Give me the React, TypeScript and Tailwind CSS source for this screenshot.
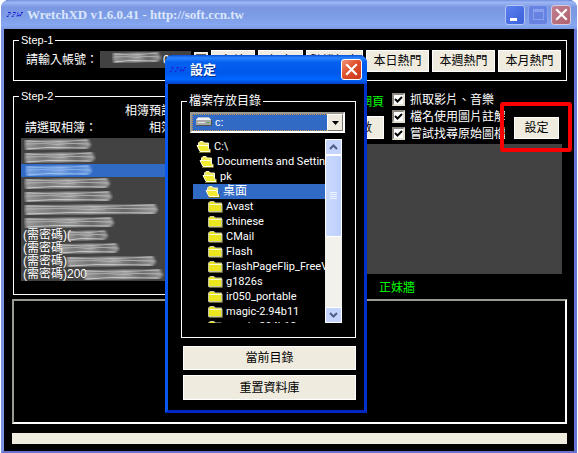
import { useState } from "react";
import type { ReactNode } from "react";

const albums = [
  { text: "", from: 3, to: 71 },
  { text: "", from: 3, to: 75 },
  { text: "", from: 4, to: 72, tint: "#a9cbf8" },
  { text: "", from: 3, to: 90 },
  { text: "", from: 3, to: 92 },
  { text: "", from: 3, to: 138 },
  { text: "", from: 3, to: 94 },
  { text: "(需密碼)(", from: 46, to: 88 },
  { text: "(需密碼", from: 38, to: 99 },
  { text: "(需密碼)", from: 45, to: 136 },
  { text: "(需密碼)200", from: 62, to: 143 },
];

const folders = [
  { name: "C:\\", open: true, pad: "pl-[3px]" },
  { name: "Documents and Settings", open: true, pad: "pl-[6px]" },
  { name: "pk", open: true, pad: "pl-[9px]" },
  { name: "桌面", open: true, pad: "pl-[12px]" },
  { name: "Avast", open: false, pad: "pl-[15px]" },
  { name: "chinese", open: false, pad: "pl-[15px]" },
  { name: "CMail", open: false, pad: "pl-[15px]" },
  { name: "Flash", open: false, pad: "pl-[15px]" },
  { name: "FlashPageFlip_FreeVersion", open: false, pad: "pl-[15px]" },
  { name: "g1826s", open: false, pad: "pl-[15px]" },
  { name: "ir050_portable", open: false, pad: "pl-[15px]" },
  { name: "magic-2.94b11", open: false, pad: "pl-[15px]" },
  { name: "magic-294b12", open: false, pad: "pl-[15px]" },
];

const options = ["抓取影片、音樂", "檔名使用圖片註解", "嘗試找尋原始圖檔"];

function AppIcon() {
  return (
    <svg width="18" height="8" viewBox="0 0 18 8" fill="none" stroke="#1a22d8" strokeWidth="1" className="shrink-0">
      <path d="M2 1.500h3L1 5.500h2M7 1.500h3L6 5.500h2M12 1.500l-1 4 3-2v2l2-4M15 1.500h2" strokeDasharray="2 .6" />
    </svg>
  );
}

// brushed-over text
function Smudge({ from, to, tint = "#d8d8d8" }: { from: number; to: number; tint?: string }) {
  const w = to - from;
  const id = `smudge-${from}-${to}`;
  return (
    <svg width={w} height="13" viewBox={`0 0 ${w} 13`} className="absolute top-0" style={{ left: from }}>
      <defs>
        <linearGradient id={id}>
          <stop offset="0" stopColor={tint} stopOpacity=".6" />
          <stop offset=".25" stopColor={tint} stopOpacity=".35" />
          <stop offset=".5" stopColor={tint} stopOpacity=".55" />
          <stop offset=".75" stopColor={tint} stopOpacity=".25" />
          <stop offset="1" stopColor={tint} stopOpacity=".6" />
        </linearGradient>
        <filter id={`${id}-soft`} x="-5%" y="-20%" width="110%" height="140%">
          <feGaussianBlur stdDeviation="1.5 0.4" />
        </filter>
      </defs>
      <g filter={`url(#${id}-soft)`} fill="none" stroke={tint}>
        <path d={`M1 2Q0 7 2 12L${w - 4} 11L${w - 1} 7L${w - 4} 1Z`} fill={`url(#${id})`} stroke="none" />
        <path d={`M2 3L${w * 0.4} 4L${w - 4} 2`} strokeOpacity=".6" />
        <path d={`M2 6L${w * 0.3} 5.500L${w * 0.6} 7`} strokeOpacity=".5" />
        <path d={`M${w * 0.5} 5L${w - 3} 6`} strokeOpacity=".6" />
        <path d={`M2 11L${w * 0.35} 9.500L${w - 6} 10`} strokeOpacity=".8" />
      </g>
    </svg>
  );
}

function Folder({ open }: { open: boolean }) {
  return (
    <svg width="15" height="13" viewBox="0 0 15 13" className="shrink-0">
      {open ? (
        <>
          <path d="M2.500 9V3L4 1.500h3L8.500 3h4V8" fill="#f0e850" stroke="#f6f4d8" />
          <path d="M1 5.500h10.500L14 11.500H4Z" fill="#f2ec30" stroke="#fffde0" />
          <path d="M3 12.500h11.500V9" stroke="#77702a" fill="none" />
        </>
      ) : (
        <>
          <path d="M.5 11.500V3L2 1.500h4L7.500 3h6v8.500Z" fill="#ece61e" stroke="#c6c6a8" />
          <path d="M1.500 4.500h12" stroke="#fdfbd0" />
          <path d="M1 12.500h13.500V4" stroke="#6b6830" fill="none" />
        </>
      )}
    </svg>
  );
}

function Group({ title, className, children }: { title: string; className?: string; children: ReactNode }) {
  return (
    <fieldset className={`min-w-0 border border-white ${className ?? ""}`}>
      <legend className="ml-[5px] h-[14px] px-[2px] leading-[14px]">{title}</legend>
      {children}
    </fieldset>
  );
}

function Btn({ className, children }: { className?: string; children: ReactNode }) {
  return (
    <button type="button" className={`border border-white bg-[#efebde] text-center text-[12px] whitespace-nowrap text-black ${className ?? ""}`}>
      {children}
    </button>
  );
}

function Cross() {
  return (
    <svg width="13" height="13" viewBox="0 0 13 13" stroke="#fff" strokeWidth="2.2" strokeLinecap="square">
      <path d="M2 2l9 9M11 2l-9 9" />
    </svg>
  );
}

function SettingsDialog() {
  const [selected, setSelected] = useState(3);

  return (
    <div
      role="dialog"
      aria-label="設定"
      className="absolute top-[55px] left-[161px] w-[202px] rounded-t-lg border-x-[3px] border-b-[3px] border-l-[#0858ee] border-r-[#0030c8] border-b-[#0028c0] bg-black"
    >
      <div className="-mx-[3px] flex h-[29px] items-center rounded-t-lg bg-[linear-gradient(#0a4fd8_0%,#2a84ff_10%,#0560f0_25%,#0058ea_60%,#0066ff_85%,#003fc8_100%)] pr-[5px] pl-1">
        <AppIcon />
        <h2 className="ml-[3px] flex-1 text-[13px] font-bold text-white [text-shadow:1px_1px_#003090]">設定</h2>
        <button
          type="button"
          aria-label="關閉"
          className="flex size-[21px] items-center justify-center rounded-[3px] border border-white bg-[linear-gradient(135deg,#f0987a,#e0502c_45%,#c8381c)]"
        >
          <Cross />
        </button>
      </div>

      <div className="pt-[10px] pr-[8px] pb-[10px] pl-[13px]">
        <Group title="檔案存放目錄">
          <div className="pt-[4px] pr-[10px] pb-[14px] pl-[8px]">
            <div className="relative h-[21px] border-2 border-t-[#9c9a90] border-r-white border-b-white border-l-[#9c9a90] bg-black">
              <select
                aria-label="磁碟機"
                className="block h-[17px] w-full appearance-none border border-dotted border-[#c8944a] bg-[#316ac5] pl-[22px] text-[11px] leading-[15px] text-white"
              >
                <option>c:</option>
              </select>
              <svg width="17" height="9" viewBox="0 0 17 9" className="pointer-events-none absolute top-[3px] left-[3px]">
                <path d="M3 0.500H14L16.500 3V8.500H1V3Z" fill="#a8a8a8" />
                <path d="M3 0.500H14L16 3H1Z" fill="#f4f4f4" />
                <path d="M1 8.500H16.500V3" stroke="#505050" fill="none" />
                <path d="M3 5.500h7" stroke="#e8e8e8" />
                <path d="M12 5.500h2" stroke="#28b828" />
              </svg>
              <span className="pointer-events-none absolute inset-y-0 right-0 flex w-[16px] items-center justify-center border border-t-white border-r-[#77756a] border-b-[#77756a] border-l-white bg-[#efebde]">
                <svg width="7" height="4" viewBox="0 0 7 4">
                  <path d="M0 0h7L3.500 4Z" />
                </svg>
              </span>
            </div>

            <div className="mt-[6px] mr-[3px] ml-[3px] flex h-[184px]">
              <ul role="listbox" aria-label="目錄" className="min-w-0 flex-1 overflow-hidden font-[Roboto,'Noto_Sans_CJK_TC',sans-serif] text-[11px]">
                {folders.map((folder, i) => (
                  <li
                    key={folder.name}
                    role="option"
                    aria-selected={i === selected}
                    onClick={() => setSelected(i)}
                    className={`flex h-[15px] items-center gap-[3px] whitespace-nowrap ${folder.pad} ${i === selected ? "bg-[#316ac5] text-[12px]" : ""}`}
                  >
                    <Folder open={folder.open} />
                    <span className="leading-[15px]">{folder.name}</span>
                  </li>
                ))}
              </ul>
              <div className="flex w-[17px] shrink-0 flex-col bg-[#f3f1ec]">
                <span className="flex h-[16px] items-center justify-center rounded-[2px] border border-white bg-[#c4d4fc]">
                  <svg width="9" height="6" viewBox="0 0 9 6" fill="none" stroke="#4d6185" strokeWidth="2">
                    <path d="M1 5l3.500-3.500L8 5" />
                  </svg>
                </span>
                <span className="flex h-[82px] items-center justify-center rounded-[2px] border border-white bg-[linear-gradient(90deg,#cbdafe,#bccffb)]">
                  <svg width="7" height="8" viewBox="0 0 7 8" stroke="#eef4fe">
                    <path d="M0 .5h7M0 2.500h7M0 4.500h7M0 6.500h7" />
                  </svg>
                </span>
                <span className="mt-auto flex h-[16px] items-center justify-center rounded-[2px] border border-white bg-[#c4d4fc]">
                  <svg width="9" height="6" viewBox="0 0 9 6" fill="none" stroke="#4d6185" strokeWidth="2">
                    <path d="M1 1l3.500 3.500L8 1" />
                  </svg>
                </span>
              </div>
            </div>
          </div>
        </Group>
        <div className="mt-[8px] ml-[2px] flex flex-col gap-[5px]">
          <Btn className="h-[24px]">當前目錄</Btn>
          <Btn className="h-[25px]">重置資料庫</Btn>
        </div>
      </div>
    </div>
  );
}

export default function App() {
  return (
    <div className="bg-white px-px font-['Liberation_Sans','Noto_Sans_CJK_TC',sans-serif] text-[12px] leading-[14px] text-white">
      <main className="relative rounded-t-lg border-x-[3px] border-b-2 border-l-[#7b93e3] border-r-[#6a76d4] border-b-[#6a70cc] bg-black">
        <header className="-mx-[3px] flex h-[29px] items-center rounded-t-lg bg-[linear-gradient(#7390e0_0%,#9db8f4_8%,#7b97e2_25%,#7d9ce6_55%,#86a8f0_88%,#7a98e0_100%)] pr-[6px] pl-[5px]">
          <AppIcon />
          <h1 className="ml-[3px] flex-1 truncate font-['Liberation_Serif',serif] text-[13px] font-bold text-[#dbe6fb]">
            WretchXD v1.6.0.41 - http://soft.ccn.tw
          </h1>
          <div className="flex gap-[3px]">
            <button type="button" aria-label="最小化" className="flex size-[20px] items-end rounded-[3px] border border-[#b4c4f4] bg-[linear-gradient(135deg,#5a80ee,#3a60dc)] pb-[3px] pl-[4px]">
              <span className="h-[3px] w-[7px] bg-white" />
            </button>
            <button type="button" aria-label="最大化" disabled className="flex size-[20px] items-center justify-center rounded-[3px] border border-[#8ca4ec] bg-[#6683e2]">
              <span className="size-[11px] border border-t-[3px] border-[#8aa0ee]" />
            </button>
            <button type="button" aria-label="關閉" className="flex size-[20px] items-center justify-center rounded-[3px] border border-[#d8c8e0] bg-[linear-gradient(135deg,#c08090,#b0606c)]">
              <Cross />
            </button>
          </div>
        </header>

        <div className="pt-1 pr-[7px] pb-[7px] pl-2">
          <Group title="Step-1" className="ml-px pb-[8px] [&>legend]:text-[11px]">
            <div className="flex items-start gap-[3px] pt-[3px] pr-[7px] pl-[12px]">
              <label htmlFor="account" className="w-[71px] shrink-0 leading-[20px] whitespace-nowrap">
                請輸入帳號：
              </label>
              <div className="relative mt-px w-[91px] shrink-0">
                <input id="account" defaultValue="00" className="block h-[17px] w-full bg-[#424242] pl-[63px] text-[12px] text-white" />
                <Smudge from={12} to={62} />
              </div>
              <button type="button" aria-label="歷史帳號" className="mt-[2px] h-[17px] w-[14px] shrink-0 border-2 border-[#efebde] bg-[#5a5a5a]" />
              <div className="flex flex-1 justify-end gap-[3px]">
                <Btn className="h-[22px] w-[44px]">名片</Btn>
                <Btn className="h-[22px] w-[45px]">相本</Btn>
                <Btn className="h-[22px] w-[57px]">隨機相本</Btn>
                <Btn className="h-[22px] w-[63px]">本日熱門</Btn>
                <Btn className="h-[22px] w-[63px]">本週熱門</Btn>
                <Btn className="h-[22px] w-[63px]">本月熱門</Btn>
              </div>
            </div>
          </Group>

          <div className="mt-[8px] ml-px flex">
            <Group title="Step-2" className="w-[340px] shrink-0 pb-[11px] [&>legend]:text-[11px]">
              <p className="pl-[111px] leading-[16px]">相簿預設名稱</p>
              <div className="flex justify-between pr-[155px] pl-[11px] leading-[18px]">
                <span id="albums">請選取相簿：</span>
                <span>相簿密碼</span>
              </div>
              <ul role="listbox" aria-labelledby="albums" className="mt-px mr-[7px] ml-[7px] bg-[#424242]">
                {albums.map((album, i) => (
                  <li
                    key={i}
                    role="option"
                    aria-selected={i === 2}
                    className={`relative h-[13px] pl-[2px] leading-[13px] ${i === 2 ? "bg-[#316ac5]" : ""}`}
                  >
                    {album.text}
                    <Smudge from={album.from} to={album.to} tint={album.tint} />
                  </li>
                ))}
              </ul>
            </Group>

            <section className="ml-[6px] flex min-w-0 flex-1 flex-col pt-[2px]">
              <div className="flex h-[53px]">
                <div className="flex w-[25px] flex-col items-end">
                  <a href="#page" className="pt-[4px] whitespace-nowrap text-[#00ff00]">
                    網頁
                  </a>
                  <Btn className="mt-[7px] h-[23px] w-[60px] shrink-0">下載數</Btn>
                </div>
                <div className="ml-[8px] w-[113px] overflow-hidden">
                  {options.map((option) => (
                    <label key={option} className="flex h-[17px] items-center gap-[5px] whitespace-nowrap">
                      <span className="relative size-[13px] shrink-0">
                        <input
                          type="checkbox"
                          defaultChecked
                          className="peer block size-[13px] appearance-none border-2 border-t-[#8a8880] border-r-[#e4e0d4] border-b-[#e4e0d4] border-l-[#8a8880] bg-white"
                        />
                        <svg viewBox="0 0 13 13" className="pointer-events-none absolute inset-0 hidden peer-checked:block" fill="none" stroke="#000" strokeWidth="2">
                          <path d="M3 6l2.500 2.500L10 4" />
                        </svg>
                      </span>
                      {option}
                    </label>
                  ))}
                </div>
                <div className="relative mt-[26px] ml-auto h-[22px] w-[45px]">
                  <Btn className="size-full">設定</Btn>
                  <span className="pointer-events-none absolute -top-[15px] -right-[13px] -bottom-[13px] -left-[14px] z-10 rounded-[3px] border-4 border-[#fb0000]" />
                </div>
                <span className="w-[8px]" />
              </div>
              <div className="mr-[5px] h-[130px] bg-[#424242]" />
              <a href="#wall" className="mt-[7px] ml-[20px] text-[#00ff00]">
                正妹牆
              </a>
            </section>
          </div>

          <div className="mt-[4px] h-[125px] border-2 border-t-[#9c9a90] border-r-white border-b-white border-l-[#9c9a90]" />
          <div role="progressbar" aria-label="進度" className="mt-[9px] h-[11px] bg-[#efebde]" />
        </div>

        <SettingsDialog />
      </main>
    </div>
  );
}
